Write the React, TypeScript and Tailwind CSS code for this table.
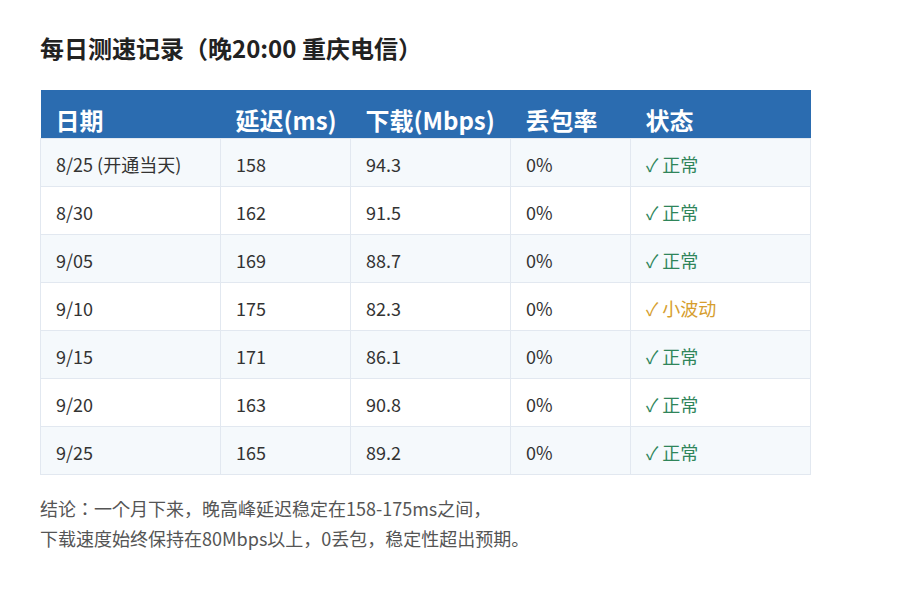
const rows = [
  { date: '8/25 (开通当天)', ping: '158', down: '94.3', loss: '0%', status: '正常', ok: true },
  { date: '8/30', ping: '162', down: '91.5', loss: '0%', status: '正常', ok: true },
  { date: '9/05', ping: '169', down: '88.7', loss: '0%', status: '正常', ok: true },
  { date: '9/10', ping: '175', down: '82.3', loss: '0%', status: '小波动', ok: false },
  { date: '9/15', ping: '171', down: '86.1', loss: '0%', status: '正常', ok: true },
  { date: '9/20', ping: '163', down: '90.8', loss: '0%', status: '正常', ok: true },
  { date: '9/25', ping: '165', down: '89.2', loss: '0%', status: '正常', ok: true },
];

const headers = [
  { label: '日期', w: 'w-[180px]' },
  { label: '延迟(ms)', w: 'w-[130px]' },
  { label: '下载(Mbps)', w: 'w-[160px]' },
  { label: '丢包率', w: 'w-[120px]' },
  { label: '状态', w: 'w-[180px]' },
];

export default function App() {
  return (
    <div
      className="min-h-[600px] bg-white px-[40px] pt-[30px] text-[#333]"
      style={{ fontFamily: '"Noto Sans CJK JP", "Noto Sans CJK SC", "Noto Sans", sans-serif' }}
    >
      <h1 className="text-[24px] font-bold leading-[36px] text-[#222]">每日测速记录（晚20:00 重庆电信）</h1>

      <table className="mt-[24px] w-[770px] table-fixed border-collapse">
        <thead>
          <tr className="bg-[#2b6cb0]">
            {headers.map((h) => (
              <th
                key={h.label}
                className={`${h.w} h-[48px] whitespace-nowrap px-[15px] pt-[12px] text-left align-middle text-[24px] font-bold leading-[30px] text-white`}
              >
                {h.label}
              </th>
            ))}
          </tr>
        </thead>
        <tbody>
          {rows.map((r, i) => (
            <tr key={r.date} className={i % 2 === 0 ? 'bg-[#f5f9fc]' : 'bg-white'}>
              <td className="h-[48px] border border-[#e2e8f0] px-[15px] pt-[3px] text-[18px] leading-[24px]">{r.date}</td>
              <td className="border border-[#e2e8f0] px-[15px] pt-[3px] text-[18px] leading-[24px]">{r.ping}</td>
              <td className="border border-[#e2e8f0] px-[15px] pt-[3px] text-[18px] leading-[24px]">{r.down}</td>
              <td className="border border-[#e2e8f0] px-[15px] pt-[3px] text-[18px] leading-[24px]">{r.loss}</td>
              <td
                className={`border border-[#e2e8f0] px-[15px] pt-[3px] text-[18px] leading-[24px] ${
                  r.ok ? 'text-[#2f855a]' : 'text-[#d69e2e]'
                }`}
              >
                ✓ {r.status}
              </td>
            </tr>
          ))}
        </tbody>
      </table>

      <p className="mt-[18px] text-[18px] leading-[30px] text-[#555]">
        结论：一个月下来，晚高峰延迟稳定在158-175ms之间，
        <br />
        下载速度始终保持在80Mbps以上，0丢包，稳定性超出预期。
      </p>
    </div>
  );
}
